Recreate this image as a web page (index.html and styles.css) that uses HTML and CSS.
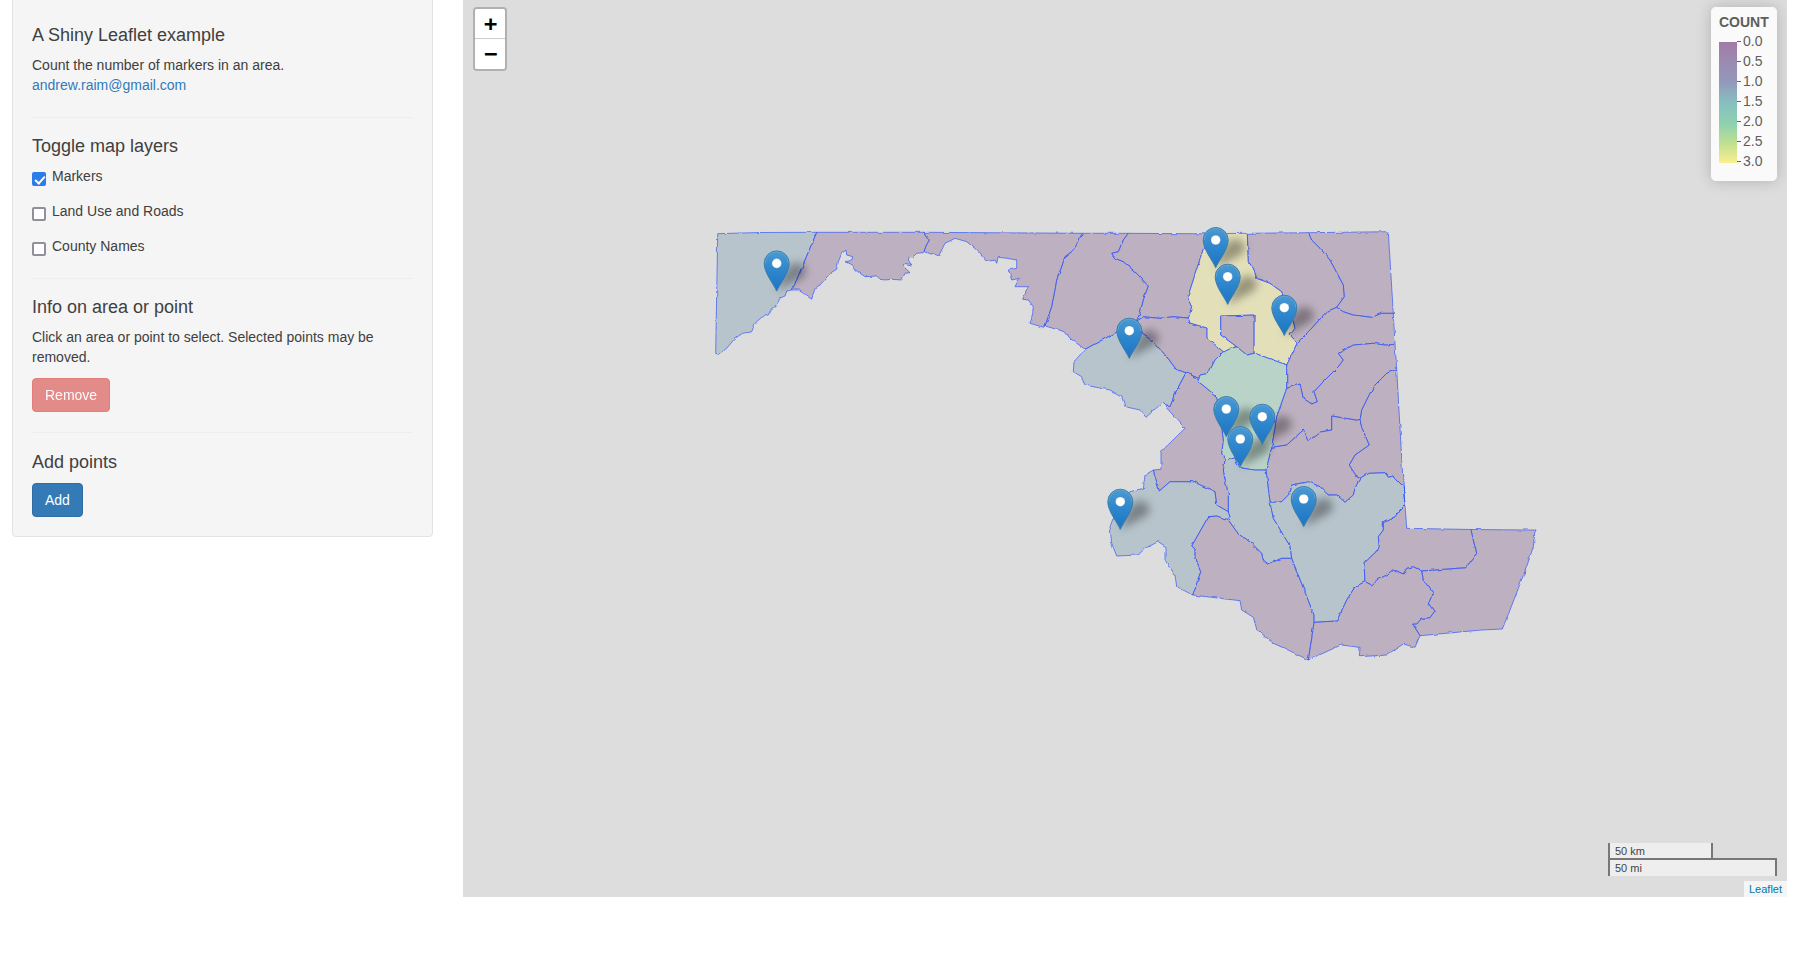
FILE: index.html
```html
<!DOCTYPE html>
<html lang="en">
<head>
<meta charset="utf-8">
<title>A Shiny Leaflet example</title>
<link rel="stylesheet" href="styles.css">
</head>
<body>
<div class="page">
  <aside class="sidebar">
    <div class="well">
      <h4>A Shiny Leaflet example</h4>
      <p class="intro">Count the number of markers in an area.<br><a href="#">andrew.raim@gmail.com</a></p>
      <hr>
      <h4>Toggle map layers</h4>
      <div class="checks">
        <label class="check"><input type="checkbox" checked><span>Markers</span></label>
        <label class="check"><input type="checkbox"><span>Land Use and Roads</span></label>
        <label class="check"><input type="checkbox"><span>County Names</span></label>
      </div>
      <hr>
      <h4>Info on area or point</h4>
      <p class="info">Click an area or point to select. Selected points may be removed.</p>
      <button class="btn btn-danger" type="button">Remove</button>
      <hr>
      <h4>Add points</h4>
      <button class="btn btn-primary btn-add" type="button">Add</button>
    </div>
  </aside>
  <main class="map">
    <svg class="map-svg" viewBox="463 0 1324 897" width="1324" height="897" xmlns="http://www.w3.org/2000/svg">
      <defs>
        <linearGradient id="pinfill" gradientUnits="userSpaceOnUse" x1="0" y1="-41" x2="0" y2="0">
          <stop offset="0" stop-color="#4c9ad2"/>
          <stop offset="0.45" stop-color="#2f87cd"/>
          <stop offset="1" stop-color="#1c74c6"/>
        </linearGradient>
        <filter id="blur" x="-80%" y="-80%" width="260%" height="260%"><feGaussianBlur stdDeviation="4"/></filter>
        <filter id="rough" filterUnits="userSpaceOnUse" x="463" y="0" width="1324" height="897">
          <feTurbulence type="fractalNoise" baseFrequency="0.13" numOctaves="2" seed="4" result="n"/>
          <feDisplacementMap in="SourceGraphic" in2="n" scale="3" xChannelSelector="R" yChannelSelector="G"/>
        </filter>
        <path id="shade" class="shade" d="M0 0C7-4 15-9 24-13C32-17 31-28 20-29C12-29 6-20 0 0Z"/>
        <g id="pin">
          <path class="pin-body" d="M0-.6C-2.5-7-12.5-18.5-12.5-28.3A12.5 12.5 0 0 1 12.5-28.3C12.5-18.5 2.5-7 0-.6Z"/>
          <path class="pin-hi" d="M-11.5-28.3A11.5 11.5 0 0 1 11.5-28.3"/>
          <circle class="pin-dot" cx="0" cy="-28.3" r="4.8"/>
        </g>
      </defs>

      <g class="counties">
        <polygon class="blue" points="717.7,233.7 760,232.5 816.7,232.3 792.3,290 786.7,291 785,296 780,298 776,306.7 771.7,308.3 768.3,315 761.7,317.3 755,323.3 751.7,331.7 742.7,333.3 735,338.3 726.7,348.3 718.3,354.3 715.7,353.3"/>
        <polygon class="purple" points="816.7,232.3 924,232.3 927,237 929.3,240 926,246 924,251.7 923.3,252.7 916.7,253.3 913.3,256.7 909.3,256.7 908.3,260 911.7,265 904,263.3 903.5,266.5 910,272.7 905,273.3 901.7,280 891.7,279.3 885,280 880,279.3 876.7,276 865,276.7 860,273.3 853.3,268.3 851.7,265 845,261.7 851.7,260 852.7,256.7 846.7,255 846,250 841.7,253.3 838.3,261.7 836.7,269.3 830,273.3 825,279.3 820,285 815,288.3 811.7,299.3 803.3,293.3 798.3,290 792.3,290"/>
        <polygon class="purple" points="924,232.3 1082.7,233.3 1078.3,240 1076.7,245 1071.7,251.7 1065,256.7 1061.7,266.7 1056.7,280 1055,290 1051.7,306.7 1045,326 1043.3,327.3 1030,323.3 1032.7,313.3 1033.3,306.7 1028.3,300 1022.7,299.3 1028.3,286.7 1015,286.7 1019.3,278.3 1011.7,280 1008.3,270 1016.7,268.3 1016.7,260 1006.7,258.3 998.3,257.3 996.7,263.3 995,260 986.7,261.7 976.7,250 966.7,241.7 955,238.3 945,243.3 938.3,256.7 925,251.7 924,251.7 926,246 929.3,240 927,237"/>
        <polygon class="purple" points="1082.7,233.3 1128.3,233.3 1123.3,240 1118.3,251.7 1111.7,253.3 1115,258.3 1123.3,261.7 1135,271.7 1148.3,286 1143.3,300 1140,313.3 1136,321.7 1085,349.3 1070,338.3 1065,331.7 1045,326 1051.7,306.7 1055,290 1056.7,280 1061.7,266.7 1065,256.7 1071.7,251.7 1076.7,245 1078.3,240"/>
        <polygon class="purple" points="1128.3,233.3 1205,233.8 1204,246.7 1190,290 1187.7,298.3 1191.7,306.7 1189,316.7 1188.3,318 1173.3,316.7 1160,318.3 1143.3,316.7 1136,321.7 1140,313.3 1143.3,300 1148.3,286 1135,271.7 1123.3,261.7 1115,258.3 1111.7,253.3 1118.3,251.7 1123.3,240"/>
        <polygon class="blue" points="1085,349.3 1136,321.7 1141.7,333.3 1153.3,341.7 1166.7,356.7 1176.7,370 1186,372.7 1176.7,390 1170,406.7 1161.7,403.3 1146,417.3 1140,410 1125,406.7 1121.7,396.7 1110,390 1085,385 1081.7,376.7 1073.3,371.7 1074,361.7"/>
        <polygon class="purple" points="1136,321.7 1143.3,316.7 1160,318.3 1173.3,316.7 1188.3,318 1190,323 1207,328 1207,338 1223.3,351.7 1215,360 1208.3,373.3 1200,375 1198.3,378.3 1186,372.7 1176.7,370 1166.7,356.7 1153.3,341.7 1141.7,333.3"/>
        <polygon class="yellow" points="1205,233.8 1247.3,233.3 1248.3,261.7 1253.3,268.3 1256.7,278.3 1270,283.3 1281.7,291.7 1293.3,321.7 1295,328.3 1290,335 1297.3,342.7 1286.7,365 1255,353.3 1254,353 1254,315 1220.7,316 1220.7,335 1236.7,346.7 1230,348.3 1223.3,351.7 1207,338 1207,328 1190,323 1188.3,318 1189,316.7 1191.7,306.7 1187.7,298.3 1190,290 1204,246.7"/>
        <polygon class="purple" points="1220.7,316 1254,315 1254,353 1246.7,355 1236.7,346.7 1220.7,335"/>
        <polygon class="green" points="1223.3,351.7 1230,348.3 1236.7,346.7 1246.7,355 1255,353.3 1286.7,365 1286.7,388.3 1276.7,416.7 1271.7,447.3 1266,470 1255,470 1240,467.7 1236.7,463.3 1235,456.7 1225,460 1221.7,453.3 1223.3,440 1222,430 1216.7,396.7 1206.7,388.3 1198.3,381.7 1200,375 1208.3,373.3 1215,360"/>
        <polygon class="purple" points="1247.3,233.3 1308.3,232.7 1311.7,240 1320,248.3 1330,260 1343.3,285 1344.3,296.7 1336.7,307.3 1326.7,311.7 1310,330 1297.3,342.7 1290,335 1295,328.3 1293.3,321.7 1281.7,291.7 1270,283.3 1256.7,278.3 1253.3,268.3 1248.3,261.7"/>
        <polygon class="purple" points="1308.3,232.7 1388.3,231.7 1393.3,313.3 1381.7,313.3 1371.7,317.3 1353.3,315 1343.3,311.7 1336.7,307.3 1344.3,296.7 1343.3,285 1330,260 1320,248.3 1311.7,240"/>
        <polygon class="purple" points="1336.7,307.3 1343.3,311.7 1353.3,315 1371.7,317.3 1381.7,313.3 1393.3,313.3 1395,344.3 1385,345 1373.3,343.3 1353.3,345 1338.3,353.3 1343.3,360 1338.3,366.7 1323.3,381.7 1314,391.7 1317.3,401.7 1311.7,404 1303.3,398.3 1300,384 1286.7,388.3 1286.7,365 1297.3,342.7 1310,330 1326.7,311.7"/>
        <polygon class="purple" points="1286.7,388.3 1300,384 1303.3,398.3 1311.7,404 1317.3,401.7 1314,391.7 1323.3,381.7 1338.3,366.7 1343.3,360 1338.3,353.3 1353.3,345 1373.3,343.3 1385,345 1395,344.3 1396.7,369.3 1386.7,373.3 1373.3,386.7 1361.7,410 1360,420.7 1331.7,416 1331.7,430 1321.7,431.7 1308.3,441.7 1303.3,430 1286.7,445 1271.7,447.3 1276.7,416.7"/>
        <polygon class="purple" points="1271.7,447.3 1286.7,445 1303.3,430 1308.3,441.7 1321.7,431.7 1331.7,430 1331.7,416 1360,420.7 1362,428 1369.3,445 1355,455 1349.3,465 1356.7,476.7 1360,478.3 1355,488.3 1353.3,495 1345,502.3 1336.7,495 1328.3,495 1320,486.7 1308.3,481.7 1291.7,485 1290,493.3 1281.7,501.7 1271.7,502.3 1270,501.7 1266,470"/>
        <polygon class="purple" points="1360,420.7 1361.7,410 1373.3,386.7 1386.7,373.3 1396.7,369.3 1403.3,486.7 1393.3,476 1388.3,477.3 1385,472.7 1368.3,473.3 1360,478.3 1356.7,476.7 1349.3,465 1355,455 1369.3,445 1362,428"/>
        <polygon class="blue" points="1225,460 1235,456.7 1236.7,463.3 1240,467.7 1255,470 1266,470 1270,501.7 1273.3,518.3 1290,546 1291.7,558.3 1281.7,558.3 1268.3,564 1263.3,560 1261.7,553.3 1251.7,543.3 1236.7,531.7 1228.3,520 1230,516.7 1228.3,513.3 1228.3,493.3 1225,480 1223.3,470"/>
        <polygon class="purple" points="1186,372.7 1176.7,390 1170,406.7 1163,404 1185,428.3 1161,451.7 1161,469.3 1153.3,470 1159.3,491 1170,481.7 1193.3,481.7 1215,491.7 1216.7,505 1228.3,511.7 1228.3,493.3 1225,480 1223.3,470 1225,460 1221.7,453.3 1223.3,440 1222,430 1216.7,396.7 1206.7,388.3 1198.3,381.7 1198.3,378.3"/>
        <polygon class="blue" points="1153.3,470 1145,475 1143.3,488.3 1130,491.7 1120,500 1110,526.7 1111.7,543.3 1116.7,556 1138.3,555 1145,548.3 1158.3,541.7 1166,546.7 1166,561.7 1175,575 1176.7,586.7 1192.7,595 1200.7,571.7 1195,558.3 1195,549 1191.7,546 1208.3,516.7 1216.7,516 1226.7,519.3 1230,516.7 1228.3,511.7 1216.7,505 1215,491.7 1193.3,481.7 1170,481.7 1159.3,491"/>
        <polygon class="purple" points="1191.7,546 1208.3,516.7 1216.7,516 1226.7,519.3 1228.3,520 1236.7,531.7 1251.7,543.3 1261.7,553.3 1263.3,560 1268.3,564 1281.7,558.3 1291.7,558.3 1314,615 1314,622.3 1308.3,660 1286.7,649.3 1273.3,643.3 1256.7,629.3 1253.3,617.3 1241.7,610 1240,600.7 1192.7,595 1200.7,571.7 1195,558.3 1195,549"/>
        <polygon class="blue" points="1271.7,502.3 1281.7,501.7 1290,493.3 1291.7,485 1308.3,481.7 1320,486.7 1328.3,495 1336.7,495 1345,502.3 1353.3,495 1355,488.3 1360,478.3 1368.3,473.3 1385,472.7 1388.3,477.3 1393.3,476 1403.3,486.7 1405,505 1400,510 1395,516.7 1383.3,522.7 1383.3,530 1378.3,536.7 1379.3,546.7 1376,551.7 1364,563.3 1365,581.7 1355,586.7 1346.7,600 1336.7,621 1314,622.3 1314,615 1291.7,558.3 1290,546 1273.3,518.3 1270,501.7"/>
        <polygon class="purple" points="1403.3,486.7 1405,505 1406.7,528.3 1471,529.5 1473.3,540 1476.7,553.3 1466,567.7 1421.7,571 1413.3,566.7 1406.7,568.3 1403.3,574 1393.3,569.3 1386.7,575 1376.7,580 1371.7,585 1365,581.7 1364,563.3 1376,551.7 1379.3,546.7 1378.3,536.7 1383.3,530 1383.3,522.7 1395,516.7 1400,510 1405,505"/>
        <polygon class="purple" points="1471,529.5 1535,530 1533.3,546.7 1526.7,566.7 1510,610 1502.3,629 1481.7,630 1420,635.7 1412.7,624 1416.7,624 1421.7,618.3 1430,617.7 1434.3,611.7 1428.3,603.3 1433.3,593.3 1423.3,580 1421.7,571 1466,567.7 1476.7,553.3 1473.3,540"/>
        <polygon class="purple" points="1314,622.3 1336.7,621 1346.7,600 1355,586.7 1365,581.7 1371.7,585 1376.7,580 1386.7,575 1393.3,569.3 1403.3,574 1406.7,568.3 1413.3,566.7 1421.7,571 1423.3,580 1433.3,593.3 1428.3,603.3 1434.3,611.7 1430,617.7 1421.7,618.3 1416.7,624 1412.7,624 1420,635.7 1415,647.3 1403.3,644 1386.7,655 1359.3,656.7 1360,647.3 1341,645 1308.3,660"/>
      </g>

      <g class="shadows">
        <use href="#shade" x="776.7" y="291.7"/>
        <use href="#shade" x="1215.7" y="268.3"/>
        <use href="#shade" x="1227.7" y="305"/>
        <use href="#shade" x="1284.3" y="336"/>
        <use href="#shade" x="1129.3" y="359"/>
        <use href="#shade" x="1226.3" y="437.3"/>
        <use href="#shade" x="1262.3" y="445"/>
        <use href="#shade" x="1240.3" y="467.3"/>
        <use href="#shade" x="1120.3" y="530"/>
        <use href="#shade" x="1303.7" y="527.3"/>
      </g>
      <g class="markers">
        <use href="#pin" x="776.7" y="291.7"/>
        <use href="#pin" x="1215.7" y="268.3"/>
        <use href="#pin" x="1227.7" y="305"/>
        <use href="#pin" x="1284.3" y="336"/>
        <use href="#pin" x="1129.3" y="359"/>
        <use href="#pin" x="1226.3" y="437.3"/>
        <use href="#pin" x="1262.3" y="445"/>
        <use href="#pin" x="1240.3" y="467.3"/>
        <use href="#pin" x="1120.3" y="530"/>
        <use href="#pin" x="1303.7" y="527.3"/>
      </g>
    </svg>

    <div class="zoom">
      <a class="zoom-btn zoom-in" href="#">+</a>
      <a class="zoom-btn" href="#">&#8722;</a>
    </div>

    <div class="legend">
      <div class="legend-title">COUNT</div>
      <div class="legend-body">
        <div class="legend-bar"></div>
        <div class="legend-labels">
          <span>0.0</span><span>0.5</span><span>1.0</span><span>1.5</span><span>2.0</span><span>2.5</span><span>3.0</span>
        </div>
      </div>
    </div>

    <div class="scale">
      <div class="scale-line scale-km">50 km</div>
      <div class="scale-line scale-mi">50 mi</div>
    </div>
    <div class="attribution"><a href="#">Leaflet</a></div>
  </main>
</div>
</body>
</html>
```

FILE: styles.css
```css
* { box-sizing: border-box; }
html, body { margin: 0; padding: 0; background: #fff; overflow: hidden; }
body { font: 14px/20px "Liberation Sans", Arial, sans-serif; color: #404040; }

.page { display: flex; align-items: flex-start; height: 957px; }
.sidebar { flex: 0 0 463px; padding-left: 12px; }

.well {
  width: 421px;
  margin-top: -5px;
  padding: 19px;
  background: #f5f5f5;
  border: 1px solid #e3e3e3;
  border-radius: 4px;
  box-shadow: inset 0 1px 1px rgba(0,0,0,.05);
}
h4 { margin: 11px 0 9px; font-size: 18px; font-weight: 500; line-height: 19.8px; color: #404040; }
p { margin: 0; }
a { color: #337ab7; text-decoration: none; }
.intro { margin-bottom: 22px; }
.info { margin: 10px 0 11px; }
hr { margin: 0 0 19px; border: 0; border-top: 1px solid #eee; }
.btn + hr { margin: 20px 0; }

.checks { display: flex; flex-direction: column; gap: 15px; margin-bottom: 22px; }
.check { display: flex; align-items: flex-start; gap: 6px; }
.check input {
  appearance: none;
  position: relative;
  flex: none;
  width: 14px;
  height: 14px;
  margin: 6px 0 0;
  background: #fff;
  border: 2px solid #8f8f9d;
  border-radius: 2px;
}
.check input:checked { background: #2b7de9; border-color: #2b7de9; }
.check input:checked::after {
  content: "";
  position: absolute;
  left: 3px;
  top: 0;
  width: 4px;
  height: 8px;
  border: solid #fff;
  border-width: 0 2px 2px 0;
  transform: rotate(42deg);
}

.btn {
  display: block;
  padding: 6px 12px;
  font: inherit;
  color: #fff;
  border: 1px solid;
  border-radius: 4px;
}
.btn-danger { background: #d9534f; border-color: #d43f3a; opacity: .65; }
.btn-primary { background: #337ab7; border-color: #2e6da4; }
.btn-add { margin-top: 10px; }

.map { position: relative; flex: 0 0 1324px; height: 897px; background: #ddd; overflow: hidden; font-size: 12px; }
.map-svg { display: block; }

.counties { filter: url(#rough); }
.counties polygon { stroke: #2a50ff; stroke-opacity: .65; stroke-width: 1; stroke-linejoin: round; fill-opacity: .5; }
.purple { fill: #9d83a3; }
.blue { fill: #91abbb; }
.yellow { fill: #e9e195; }
.green { fill: #97c9b3; }

.shade { fill: #000; fill-opacity: .34; filter: url(#blur); }
.pin-body { fill: url(#pinfill); stroke: #3d7da6; stroke-width: 1; }
.pin-hi { fill: none; stroke: #6eaedb; stroke-opacity: .6; stroke-width: 1; }
.pin-dot { fill: #fff; stroke: #3d7da6; stroke-opacity: .5; stroke-width: .6; }

.zoom {
  position: absolute;
  left: 10px;
  top: 7px;
  width: 34px;
  background-clip: padding-box;
  border: 2px solid rgba(0,0,0,.2);
  border-radius: 4px;
}
.zoom-btn {
  display: block;
  width: 30px;
  height: 30px;
  background: #fff;
  color: #000;
  font: bold 22px/30px "DejaVu Sans Mono", monospace;
  text-align: center;
  text-indent: 1px;
  border-radius: 0 0 2px 2px;
}
.zoom-in { border-bottom: 1px solid #ccc; border-radius: 2px 2px 0 0; }

.legend {
  position: absolute;
  top: 7px;
  right: 10px;
  width: 66px;
  height: 174px;
  padding: 6px 8px;
  font-size: 14px;
  color: #5e5e5e;
  background: rgba(255,255,255,.85);
  border-radius: 5px;
  box-shadow: 0 0 15px rgba(0,0,0,.2);
}
.legend-title { font-weight: bold; line-height: 18px; }
.legend-body { display: flex; }
.legend-bar {
  flex: none;
  width: 18px;
  height: 121px;
  margin-top: 11px;
  background: linear-gradient(#a27ca6 0%, #9399bb 33%, #86bfc0 50%, #8dd0b0 67%, #bfe08f 84%, #fbef8f 100%);
}
.legend-labels { display: flex; flex-direction: column; }
.legend-labels span { display: flex; align-items: center; gap: 2px; height: 20px; line-height: 20px; }
.legend-labels span::before { content: ""; width: 4px; height: 1px; background: #666; }

.scale { position: absolute; right: 10px; bottom: 21px; width: 169px; font-size: 11px; line-height: 12px; color: #444; }
.scale-line { padding: 2px 5px 1px; background: rgba(255,255,255,.5); border: 2px solid #777; }
.scale-km { width: 105px; height: 17px; border-top: 0; }
.scale-mi { width: 169px; height: 18px; margin-top: -2px; padding-top: 2px; border-bottom: 0; }

.attribution {
  position: absolute;
  right: 0;
  bottom: 0;
  height: 16px;
  padding: 0 5px;
  font-size: 11px;
  line-height: 16px;
  background: rgba(255,255,255,.7);
}
.attribution a { color: #0078a8; }
```
